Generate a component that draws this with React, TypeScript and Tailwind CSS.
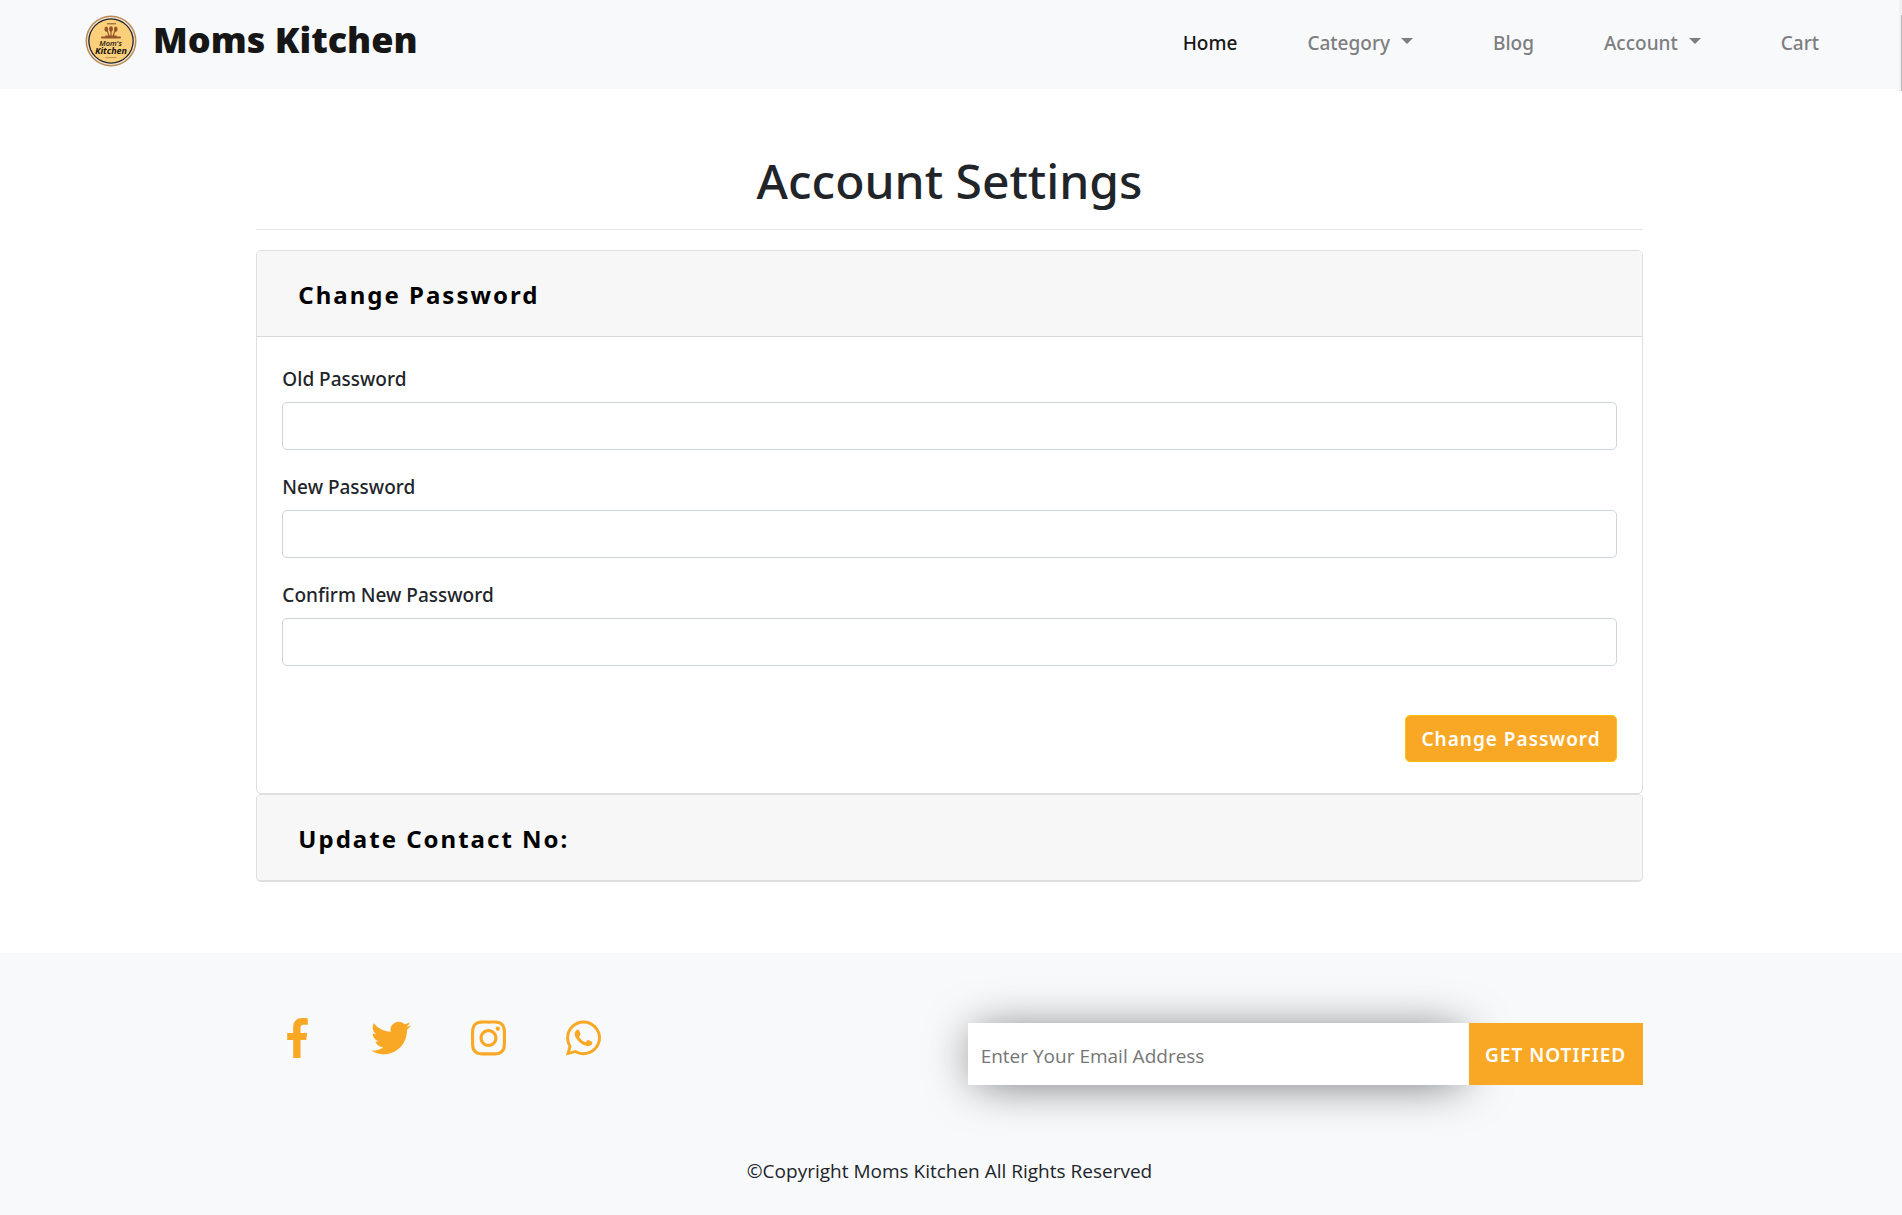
import { useState } from "react";
import { FaInstagram, FaTwitter, FaWhatsapp } from "react-icons/fa";

function Logo() {
  return (
    <svg viewBox="0 0 52 52" className="size-[52px]" role="img" aria-label="Moms Kitchen logo">
      <circle cx="26" cy="26" r="25.5" fill="#b98a56" />
      <circle cx="26" cy="26" r="24" fill="#f3e6d2" />
      <circle cx="26" cy="26" r="22.8" fill="#20242b" />
      <circle cx="26" cy="26" r="21.5" fill="#fccf7a" />
      <path d="M22 8.8h9" stroke="#4a3620" strokeWidth="0.8" />
      <g fill="#96562a">
        <ellipse cx="21.3" cy="14.2" rx="1.8" ry="2.6" />
        <ellipse cx="26" cy="14" rx="1.9" ry="2.8" />
        <ellipse cx="30.8" cy="14.2" rx="1.8" ry="2.6" />
        <path d="M22 15l2.2 6.5M26 15v6.5M30.2 15L28 21.5" stroke="#96562a" strokeWidth="1.2" />
        <rect x="20" y="20.4" width="12" height="1.6" rx="0.8" />
        <rect x="16" y="21.6" width="20" height="1.8" rx="0.8" />
      </g>
      <text x="25.5" y="31" textAnchor="middle" fontSize="7.5" fill="#16130f" className="font-['Open_Sans',sans-serif] font-semibold italic">
        Mom's
      </text>
      <text x="26" y="39.4" textAnchor="middle" fontSize="9" fill="#16130f" className="font-['Open_Sans',sans-serif] font-bold italic">
        Kitchen
      </text>
      <path d="M20.5 42.6h11" stroke="#b98a56" strokeWidth="0.9" />
    </svg>
  );
}

function FacebookIcon() {
  return (
    <svg viewBox="0 0 264 512" className="h-10 w-[21px]" fill="currentColor" aria-hidden="true">
      <path d="M76.7 512V283H0v-91h76.7v-71.7C76.7 42.4 124.3 0 193.8 0c33.3 0 61.9 2.5 70.2 3.6V85h-48.2c-37.8 0-45.1 18-45.1 44.3V192H256l-11.7 91h-73.6v229" />
    </svg>
  );
}

function Caret() {
  return <span className="mb-1 border-x-6 border-t-6 border-x-transparent border-t-current" />;
}

function Field({ id, label }: { id: string; label: string }) {
  return (
    <div className="mb-5">
      <label htmlFor={id} className="mb-2 block pt-0.5 font-['Noto_Sans',sans-serif] text-[19px] leading-[30px] font-medium">
        {label}
      </label>
      <input
        id={id}
        type="password"
        className="block h-12 w-full rounded-[5px] border border-[#ced4da] bg-white px-4 text-[19px]"
      />
    </div>
  );
}

function PanelHeader({ title, open, onToggle }: { title: string; open: boolean; onToggle: () => void }) {
  return (
    <h2 className={open ? "border-b border-[#d8d8d8] bg-[#f7f7f7]" : "bg-[#f7f7f7]"}>
      <button
        type="button"
        aria-expanded={open}
        onClick={onToggle}
        className="block w-full px-[41px] pt-[25px] pb-[22px] text-left font-['Noto_Sans',sans-serif] text-2xl leading-[38px] font-bold tracking-[2px] text-black"
      >
        {title}
      </button>
    </h2>
  );
}

export default function App() {
  const [passwordOpen, setPasswordOpen] = useState(true);
  const [contactOpen, setContactOpen] = useState(false);

  return (
    <div className="flex min-h-screen flex-col bg-white font-['Open_Sans','Noto_Sans',sans-serif] text-[#212529]">
      <header className="relative flex h-[89px] items-start justify-between bg-[#f8f9fb] pr-[83px] pl-[85px]">
        <a href="#" className="flex items-center gap-4 pt-[15px]">
          <Logo />
          <span className="pb-0.5 text-[36px] leading-[48px] font-extrabold text-[#161616]">Moms Kitchen</span>
        </a>
        <nav className="flex pt-7 font-['Noto_Sans',sans-serif] text-[19px] leading-[30px] font-medium text-[#7d7e7f]">
          <a href="#" className="mr-[70px] text-[#161616]">Home</a>
          <button type="button" className="mr-20 flex items-center gap-[11px]">
            Category <Caret />
          </button>
          <a href="#" className="mr-[70px]">Blog</a>
          <button type="button" className="mr-20 flex items-center gap-[11px]">
            Account <Caret />
          </button>
          <a href="#">Cart</a>
        </nav>
        <div className="absolute top-0 right-0 h-[91px] w-[3px] bg-[#f1f1f1] pt-[15px]">
          <div className="ml-auto h-full w-px bg-[#b9b9b9]" />
        </div>
      </header>

      <main className="pt-[62px] pr-[3px] pb-[71px]">
        <div className="mx-auto w-[73%]">
          <h1 className="pb-[18px] text-center font-['Noto_Sans',sans-serif] text-[48px] leading-[60px] font-medium">
            Account Settings
          </h1>
          <hr className="mb-5 border-[#e5e5e5]" />

          <section className="overflow-hidden rounded-[5px] border border-[#dfdfdf]">
            <PanelHeader title="Change Password" open={passwordOpen} onToggle={() => setPasswordOpen(!passwordOpen)} />
            {passwordOpen && (
              <form className="px-[25px] pt-[25px] pb-[31px]" onSubmit={(e) => e.preventDefault()}>
                <Field id="old-password" label="Old Password" />
                <Field id="new-password" label="New Password" />
                <Field id="confirm-password" label="Confirm New Password" />
                <div className="flex justify-end pt-[29px]">
                  <button
                    type="submit"
                    className="h-[47px] rounded-[5px] border border-[#ffc107] bg-[#f9a826] px-[15px] pt-0.5 font-['Noto_Sans',sans-serif] text-[19px] font-semibold tracking-[1px] text-white"
                  >
                    Change Password
                  </button>
                </div>
              </form>
            )}
          </section>
          <section className="overflow-hidden rounded-[5px] border border-b-2 border-[#dfdfdf]">
            <PanelHeader title="Update Contact No:" open={contactOpen} onToggle={() => setContactOpen(!contactOpen)} />
            {contactOpen && (
              <form className="px-[25px] pt-[25px] pb-[31px]" onSubmit={(e) => e.preventDefault()}>
                <Field id="contact" label="Contact No" />
              </form>
            )}
          </section>
        </div>
      </main>

      <footer className="grow bg-[#f8f9fb] pr-[3px]">
        <div className="mx-auto flex w-[73%] items-start justify-between pt-[65px]">
          <ul className="flex items-center gap-[60px] pl-[31px] text-[#f9a826]">
            <li className="w-6">
              <a href="#" aria-label="Facebook"><FacebookIcon /></a>
            </li>
            <li>
              <a href="#" aria-label="Twitter"><FaTwitter className="size-10" /></a>
            </li>
            <li>
              <a href="#" aria-label="Instagram"><FaInstagram className="h-10 w-[35px]" /></a>
            </li>
            <li>
              <a href="#" aria-label="WhatsApp"><FaWhatsapp className="h-10 w-[35px]" /></a>
            </li>
          </ul>
          <form className="mt-[5px] flex h-[62px] w-[675px]" onSubmit={(e) => e.preventDefault()}>
            <input
              type="email"
              aria-label="Email address"
              placeholder="Enter Your Email Address"
              className="min-w-0 grow bg-white px-[13px] pt-1 text-[19px] shadow-[0_3px_48px_-8px_rgba(0,0,0,0.65)] placeholder:text-[#757575]"
            />
            <button type="submit" className="relative w-[174px] bg-[#f9a826] pt-0.5 font-['Noto_Sans',sans-serif] text-[19px] font-semibold tracking-[1px] text-white">
              GET NOTIFIED
            </button>
          </form>
        </div>
        <p className="pt-[71px] pb-[29px] text-center text-[19px] leading-[30px]">
          ©Copyright Moms Kitchen All Rights Reserved
        </p>
      </footer>
    </div>
  );
}
